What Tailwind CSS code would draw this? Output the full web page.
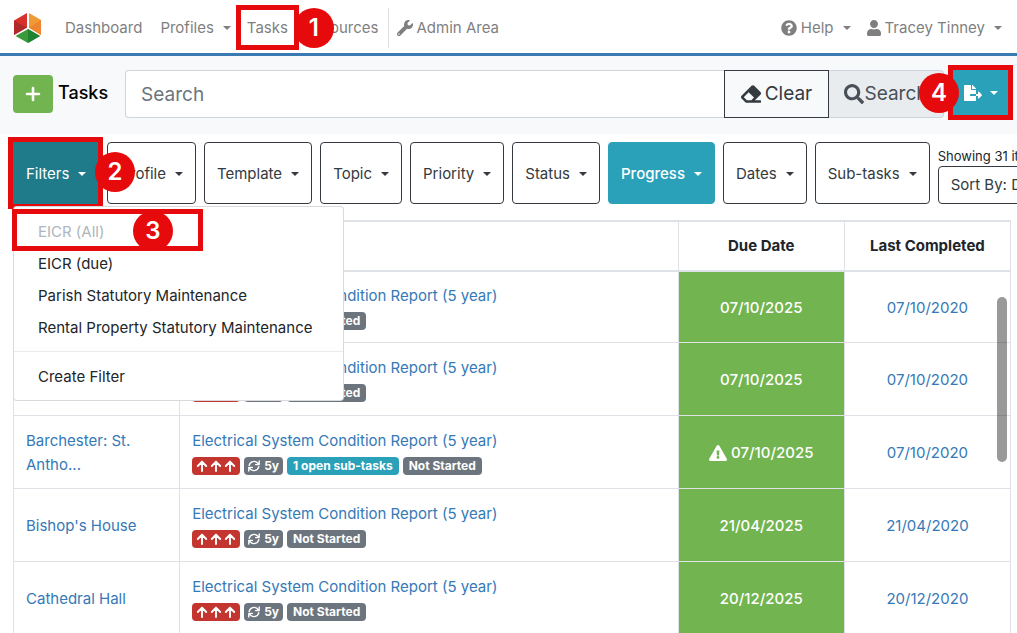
<!DOCTYPE html>
<html lang="en">
<head>
  <meta charset="UTF-8" />
  <meta name="viewport" content="width=device-width, initial-scale=1.0" />
  <title>Tasks</title>
  <script src="https://cdn.jsdelivr.net/npm/@tailwindcss/browser@4"></script>
</head>
<body class="bg-white font-[Inter,sans-serif] text-[15px] leading-6 text-[#212529] h-screen overflow-hidden">

  <!-- Icon sprite -->
  <svg class="hidden">
    <symbol id="i-caret" viewBox="0 0 10 5"><path d="M0 0h10L5 5z" /></symbol>
    <symbol id="i-wrench" viewBox="0 0 512 512"><path d="M507.73 109.1c-2.24-9.03-13.54-12.09-20.12-5.51l-74.36 74.36-67.88-11.31-11.31-67.88 74.36-74.36c6.62-6.62 3.43-17.9-5.66-20.16-47.38-11.74-99.55.91-136.58 37.93-39.64 39.64-50.55 97.1-34.05 147.2L18.74 402.76c-24.99 24.99-24.99 65.51 0 90.5 24.99 24.99 65.51 24.99 90.5 0l213.21-213.21c50.12 16.71 107.47 5.68 147.37-34.22 37.07-37.07 49.7-89.32 37.91-136.73zM64 472c-13.25 0-24-10.75-24-24 0-13.26 10.75-24 24-24s24 10.74 24 24c0 13.25-10.75 24-24 24z" /></symbol>
    <symbol id="i-help" viewBox="0 0 512 512"><path d="M504 256c0 136.997-111.043 248-248 248S8 392.997 8 256C8 119.083 119.043 8 256 8s248 111.083 248 248zM262.655 90c-54.497 0-89.255 22.957-116.549 63.758-3.536 5.286-2.353 12.415 2.715 16.258l34.699 26.31c5.205 3.947 12.621 3.008 16.665-2.122 17.864-22.658 30.113-35.797 57.303-35.797 20.429 0 45.698 13.148 45.698 32.958 0 14.976-12.363 22.667-32.534 33.976C247.128 238.528 216 254.941 216 296v4c0 6.627 5.373 12 12 12h56c6.627 0 12-5.373 12-12v-1.333c0-28.462 83.186-29.647 83.186-106.667 0-58.002-60.165-102-116.531-102zM256 338c-25.365 0-46 20.635-46 46 0 25.364 20.635 46 46 46s46-20.636 46-46c0-25.365-20.635-46-46-46z" /></symbol>
    <symbol id="i-user" viewBox="0 0 448 512"><path d="M224 256c70.7 0 128-57.3 128-128S294.7 0 224 0 96 57.3 96 128s57.3 128 128 128zm89.6 32h-16.7c-22.2 10.2-46.9 16-72.9 16s-50.6-5.8-72.9-16h-16.7C60.2 288 0 348.2 0 422.4V464c0 26.5 21.5 48 48 48h352c26.5 0 48-21.5 48-48v-41.6c0-74.2-60.2-134.4-134.4-134.4z" /></symbol>
    <symbol id="i-eraser" viewBox="0 0 512 512"><path d="M497.941 273.941c18.745-18.745 18.745-49.137 0-67.882l-160-160c-18.745-18.745-49.136-18.746-67.883 0l-256 256c-18.745 18.745-18.745 49.137 0 67.882l96 96A48.004 48.004 0 0 0 144 480h356c6.627 0 12-5.373 12-12v-40c0-6.627-5.373-12-12-12H355.883l142.058-142.059zm-302.627-62.627l137.373 137.373L265.373 416H150.628l-80-80 124.686-124.686z" /></symbol>
    <symbol id="i-search" viewBox="0 0 512 512"><path d="M505 442.7L405.3 343c-4.5-4.5-10.6-7-17-7H372c27.6-35.3 44-79.7 44-128C416 93.1 322.9 0 208 0S0 93.1 0 208s93.1 208 208 208c48.3 0 92.7-16.4 128-44v16.3c0 6.4 2.5 12.5 7 17l99.7 99.7c9.4 9.4 24.6 9.4 33.9 0l28.3-28.3c9.4-9.4 9.4-24.6.1-34zM208 336c-70.7 0-128-57.2-128-128 0-70.7 57.2-128 128-128 70.7 0 128 57.2 128 128 0 70.7-57.2 128-128 128z" /></symbol>
    <symbol id="i-export" viewBox="0 0 576 512"><path d="M384 121.9c0-6.3-2.5-12.4-7-16.9L279.1 7c-4.5-4.5-10.6-7-17-7H256v128h128zM571 308l-95.7-96.4c-10.1-10.1-27.4-3-27.4 11.3V288h-64v64h64v65.2c0 14.3 17.3 21.4 27.4 11.3L571 332c6.6-6.6 6.6-17.4 0-24zm-379 28v-32c0-8.8 7.2-16 16-16h176V160H248c-13.2 0-24-10.8-24-24V0H24C10.7 0 0 10.7 0 24v464c0 13.3 10.7 24 24 24h336c13.3 0 24-10.7 24-24V352H208c-8.8 0-16-7.2-16-16z" /></symbol>
    <symbol id="i-warning" viewBox="0 0 576 512"><path d="M569.517 440.013C587.975 472.007 564.806 512 527.94 512H48.054c-36.937 0-59.999-40.055-41.577-71.987L246.423 23.985c18.467-32.009 64.72-31.951 83.154 0l239.94 416.028zM288 354c-25.405 0-46 20.595-46 46s20.595 46 46 46 46-20.595 46-46-20.595-46-46-46zm-43.673-165.346l7.418 136c.347 6.364 5.609 11.346 11.982 11.346h48.546c6.373 0 11.635-4.982 11.982-11.346l7.418-136c.375-6.874-5.098-12.654-11.982-12.654h-63.383c-6.884 0-12.356 5.78-11.981 12.654z" /></symbol>
    <symbol id="i-up" viewBox="0 0 12 12"><path d="M6 11V1.8M1.8 6L6 1.6 10.2 6" fill="none" stroke="currentColor" stroke-width="1.9" stroke-linecap="round" stroke-linejoin="round" /></symbol>
    <symbol id="i-repeat" viewBox="0 0 12 12"><path d="M1.2 5.4A4.9 4.9 0 0 1 9.8 3.2L11 4.4M11.2 1v3.6H7.6M10.8 6.6A4.9 4.9 0 0 1 2.2 8.8L1 7.6M.8 11V7.4h3.6" fill="none" stroke="currentColor" stroke-width="1.4" stroke-linecap="round" stroke-linejoin="round" /></symbol>
  </svg>

  <!-- Top navigation -->
  <nav class="flex items-center h-14 pt-[2px] pl-3 pr-[15px] border-b-3 border-[#3a7ab3] text-[#7f7f7f] whitespace-nowrap">
    <a href="#" aria-label="Home" class="mr-[21px]">
      <svg class="w-8 h-8" viewBox="0 0 32 32">
        <path d="M15 1v14.4L2 23V8.4z" fill="#d9302c" />
        <path d="M2 8.4L15 15.4 2 23z" fill="#b02a2c" />
        <path d="M17 1l12 7v15L17 15.8z" fill="#f09a35" />
        <path d="M29 8l-12 7.8L29 23z" fill="#ee8532" />
        <path d="M16 17l12 7-12 7-12.5-7z" fill="#3a9a3c" />
        <path d="M16 17l12 7-12 7z" fill="#22832f" />
      </svg>
    </a>
    <a href="#" class="mr-[18px]">Dashboard</a>
    <a href="#" class="flex items-center gap-[9px] mr-4">Profiles <svg class="w-2 h-1 fill-current"><use href="#i-caret" /></svg></a>
    <a href="#" class="relative mr-4">Tasks
      <span class="absolute -inset-x-[11px] -top-[11px] -bottom-[10px] border-5 border-[#e60a0c]"></span>
      <span class="absolute z-10 left-[47px] -top-2 size-10 rounded-full bg-[#e60a0c] text-white text-2xl leading-10 font-semibold text-center">1</span>
    </a>
    <a href="#" class="mr-[9px]">Resources</a>
    <a href="#" class="flex items-center gap-1 h-10 pl-2 border-l border-[#dee2e6]"><svg class="size-4 fill-current"><use href="#i-wrench" /></svg>Admin Area</a>
    <a href="#" class="flex items-center gap-1 ml-auto"><svg class="size-4 fill-current"><use href="#i-help" /></svg>Help <svg class="w-2 h-1 ml-[5px] fill-current"><use href="#i-caret" /></svg></a>
    <a href="#" class="flex items-center gap-1 ml-4"><svg class="w-[14px] h-4 fill-current"><use href="#i-user" /></svg>Tracey Tinney <svg class="w-2 h-1 ml-[5px] fill-current"><use href="#i-caret" /></svg></a>
  </nav>

  <!-- Title and search -->
  <header class="flex items-center h-[78px] pl-[13px] pr-[9px] pb-[2px] bg-[#f7f9fb]">
    <button aria-label="Add task" class="flex items-center justify-center w-10 h-[38px] rounded bg-[#72b44f] text-white">
      <svg class="size-4" viewBox="0 0 16 16"><path d="M8 2v12M2 8h12" stroke="currentColor" stroke-width="2.6" stroke-linecap="round" /></svg>
    </button>
    <h1 class="ml-[5px] mr-[17px] mb-[2px] text-[18px] font-medium text-black">Tasks</h1>
    <form class="flex flex-1 h-12 text-[19px]">
      <input type="text" aria-label="Search" placeholder="Search" class="flex-1 min-w-0 px-[15px] pt-[2px] border border-r-0 border-[#ced4da] rounded-l bg-white placeholder:text-[#6c757d]" />
      <button type="button" class="flex items-center justify-center gap-1 w-[105px] border border-[#343a40] text-[#343a40]"><svg class="size-5 fill-current"><use href="#i-eraser" /></svg>Clear</button>
      <button type="button" class="flex items-center justify-center w-[115px] border border-l-0 border-[#ced4da] rounded-r bg-[#e9ecef] text-[#495057]"><svg class="size-5 fill-current"><use href="#i-search" /></svg>Search</button>
    </form>
    <button aria-label="Export" class="relative flex items-center justify-center gap-2 w-[55px] h-[45px] ml-[9px] mb-[3px] bg-[#2ba1b9] text-white">
      <svg class="w-[18px] h-4 fill-current"><use href="#i-export" /></svg>
      <svg class="w-2 h-1 fill-current"><use href="#i-caret" /></svg>
      <span class="absolute -inset-[5px] border-5 border-[#e60a0c]"></span>
      <span class="absolute -left-[34px] top-[3px] size-10 rounded-full bg-[#e60a0c] text-white text-2xl leading-10 font-semibold text-center">4</span>
    </button>
  </header>

  <!-- Filter buttons -->
  <div class="flex gap-2 h-[62px] mt-2 ml-[13px] whitespace-nowrap text-[#343a40]">
    <div class="relative shrink-0 z-20">
      <button class="flex items-center gap-[9px] h-full px-[13px] pt-[2px] bg-[#1f7a8a] text-white">Filters <svg class="w-2 h-1 fill-current"><use href="#i-caret" /></svg></button>
      <span class="absolute -inset-[5px] -right-1 border-5 border-[#e60a0c]"></span>
      <span class="absolute left-[82px] top-[10px] size-10 rounded-full bg-[#e60a0c] text-white text-2xl leading-10 font-semibold text-center">2</span>
      <ul class="absolute left-0 top-[64px] w-[331px] py-2 border border-black/15 rounded bg-white text-[#212529]">
        <li class="relative px-6 pt-[5px] pb-[3px] text-[#adb5bd]">EICR (All)
          <span class="absolute -left-[2px] -top-[6px] w-[191px] h-[42px] border-5 border-[#e60a0c] overflow-hidden">
            <span class="absolute left-[116px] -top-[3px] size-10 rounded-full bg-[#e60a0c] text-white text-2xl leading-10 font-semibold text-center">3</span>
          </span>
        </li>
        <li><a href="#" class="block px-6 pt-[5px] pb-[3px]">EICR (due)</a></li>
        <li><a href="#" class="block px-6 pt-[5px] pb-[3px]">Parish Statutory Maintenance</a></li>
        <li><a href="#" class="block px-6 pt-[5px] pb-[3px]">Rental Property Statutory Maintenance</a></li>
        <li class="my-2 border-t border-[#e9ecef]"></li>
        <li><a href="#" class="block px-6 pt-[5px] pb-[3px]">Create Filter</a></li>
      </ul>
    </div>
    <button class="flex items-center gap-[9px] shrink-0 px-3 pt-[2px] border border-[#343a40] rounded">Profile <svg class="w-2 h-1 fill-current"><use href="#i-caret" /></svg></button>
    <button class="flex items-center gap-[9px] shrink-0 px-3 pt-[2px] border border-[#343a40] rounded">Template <svg class="w-2 h-1 fill-current"><use href="#i-caret" /></svg></button>
    <button class="flex items-center gap-[9px] shrink-0 px-3 pt-[2px] border border-[#343a40] rounded">Topic <svg class="w-2 h-1 fill-current"><use href="#i-caret" /></svg></button>
    <button class="flex items-center gap-[9px] shrink-0 px-3 pt-[2px] border border-[#343a40] rounded">Priority <svg class="w-2 h-1 fill-current"><use href="#i-caret" /></svg></button>
    <button class="flex items-center gap-[9px] shrink-0 px-3 pt-[2px] border border-[#343a40] rounded">Status <svg class="w-2 h-1 fill-current"><use href="#i-caret" /></svg></button>
    <button class="flex items-center gap-[9px] shrink-0 px-3 pt-[2px] border border-[#2ba1b9] rounded bg-[#2ba1b9] text-white font-medium">Progress <svg class="w-2 h-1 fill-current"><use href="#i-caret" /></svg></button>
    <button class="flex items-center gap-[9px] shrink-0 px-3 pt-[2px] border border-[#343a40] rounded">Dates <svg class="w-2 h-1 fill-current"><use href="#i-caret" /></svg></button>
    <button class="flex items-center gap-[9px] shrink-0 px-3 pt-[2px] border border-[#343a40] rounded">Sub-tasks <svg class="w-2 h-1 fill-current"><use href="#i-caret" /></svg></button>
    <div class="flex flex-col flex-1 items-start min-w-0 overflow-hidden">
      <span class="h-6 pt-[2px] text-[13px] leading-6 text-[#212529]">Showing 31 items</span>
      <button class="h-[38px] px-3 border border-[#343a40] rounded">Sort By: Due Date</button>
    </div>
  </div>

  <!-- Task table -->
  <div class="relative mt-4 ml-[13px] mr-[6px]">
    <table class="w-full table-fixed border-collapse">
      <thead>
        <tr class="h-[50px]">
          <th class="w-1/6 border border-y-2 border-[#dee2e6]"></th>
          <th class="w-1/2 border border-y-2 border-[#dee2e6]"></th>
          <th class="w-1/6 border border-y-2 border-[#dee2e6] font-bold">Due Date</th>
          <th class="w-1/6 border border-y-2 border-[#dee2e6] font-bold">Last Completed</th>
        </tr>
      </thead>
      <tbody id="task-rows"></tbody>
    </table>
    <div class="absolute right-1 top-[77px] w-[10px] h-[165px] rounded-full bg-black/40"></div>
  </div>

  <script>
    const tasks = [
      { place: "", due: "07/10/2025", last: "07/10/2020" },
      { place: "", due: "07/10/2025", last: "07/10/2020" },
      { place: "Barchester: St. Antho...", due: "07/10/2025", last: "07/10/2020", subTasks: 1, warning: true },
      { place: "Bishop's House", due: "21/04/2025", last: "21/04/2020" },
      { place: "Cathedral Hall", due: "20/12/2025", last: "20/12/2020" }
    ];

    document.getElementById("task-rows").innerHTML = tasks.map(task => `
      <tr class="h-[73px] first:h-[71px] text-[#3579b8]">
        <td class="px-3 pt-[2px] border border-[#dee2e6]"><a href="#">${task.place}</a></td>
        <td class="px-3 border border-[#dee2e6]">
          <a href="#">Electrical System Condition Report (5 year)</a>
          <div class="flex gap-1 mt-1 text-white text-xs leading-[18px] font-bold">
            <span class="flex items-center gap-[2px] h-[18px] px-1 rounded bg-[#c4352f]">
              <svg class="size-3"><use href="#i-up" /></svg>
              <svg class="size-3"><use href="#i-up" /></svg>
              <svg class="size-3"><use href="#i-up" /></svg>
            </span>
            <span class="flex items-center gap-1 h-[18px] px-1 rounded bg-[#6c757d]"><svg class="size-3"><use href="#i-repeat" /></svg>5y</span>
            ${task.subTasks ? `<span class="h-[18px] px-[6px] rounded bg-[#2ba1b9]">${task.subTasks} open sub-tasks</span>` : ""}
            <span class="h-[18px] px-[6px] rounded bg-[#6c757d]">Not Started</span>
          </div>
        </td>
        <td class="pt-[2px] border border-[#dee2e6] bg-[#72b44f] text-white font-medium">
          <div class="flex items-center justify-center gap-1">
            ${task.warning ? `<svg class="w-[18px] h-4 fill-current"><use href="#i-warning" /></svg>` : ""}${task.due}
          </div>
        </td>
        <td class="pt-[2px] border border-[#dee2e6] text-center"><a href="#">${task.last}</a></td>
      </tr>
    `).join("");
  </script>
</body>
</html>
